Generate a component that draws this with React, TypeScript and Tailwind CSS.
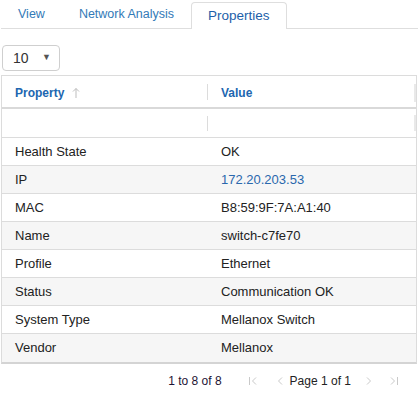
import React from "react";

const rows: { name: string; value: string; link?: boolean }[] = [
  { name: "Health State", value: "OK" },
  { name: "IP", value: "172.20.203.53", link: true },
  { name: "MAC", value: "B8:59:9F:7A:A1:40" },
  { name: "Name", value: "switch-c7fe70" },
  { name: "Profile", value: "Ethernet" },
  { name: "Status", value: "Communication OK" },
  { name: "System Type", value: "Mellanox Switch" },
  { name: "Vendor", value: "Mellanox" },
];

function Chevron({ dir, bar }: { dir: "left" | "right"; bar?: boolean }) {
  return (
    <svg width="10" height="12" viewBox="0 0 10 12" fill="none" stroke="#c9c9c9" strokeWidth="1">
      {dir === "left" ? (
        <>
          {bar && <line x1="1.5" y1="2" x2="1.5" y2="10" />}
          <polyline points="8,2.5 4.5,6 8,9.5" />
        </>
      ) : (
        <>
          <polyline points="2,2.5 5.5,6 2,9.5" />
          {bar && <line x1="8.5" y1="2" x2="8.5" y2="10" />}
        </>
      )}
    </svg>
  );
}

export default function App() {
  return (
    <div
      className="w-[418px] h-[393px] bg-white text-[13px] text-[#222]"
      style={{ fontFamily: '"Liberation Sans", Arial, sans-serif' }}
    >
      {/* вкладки */}
      <div className="flex items-end h-[29px] border-b border-[#dedede] pl-[2px] ml-[1px]">
        <div className="h-[27px] px-[15px] mr-[4px] flex items-center text-[12.5px] text-[#337ab7]">View</div>
        <div className="h-[27px] px-[15px] mr-[2px] flex items-center text-[12.5px] text-[#337ab7]">Network Analysis</div>
        <div className="h-[27px] px-[16px] -mb-px flex items-center text-[13.5px] text-[#1d5fa9] bg-white border border-b-0 border-[#dedede] rounded-t-[4px]">
          Properties
        </div>
      </div>

      {/* размер страницы */}
      <div className="mt-[16px] ml-[2px] w-[58px] h-[26px] border border-[#cfcfcf] rounded-[4px] flex items-center justify-between pl-[10px] pr-[8px]">
        <span className="text-[14px] text-[#333]">10</span>
        <span className="text-[9px] text-[#555]">▼</span>
      </div>

      {/* таблица */}
      <div className="mt-[4px] mx-[1px] border border-[#dcdcdc] border-b-[2px] border-b-[#d4d4d4]">
        <div className="relative flex h-[33px] pt-[2px] items-center border-b-[2px] border-[#d9d9d9] text-[12px] font-bold text-[#2066b0]">
          <div className="w-[206px] px-[13px] flex items-center gap-[8px] relative">
            <span>Property</span>
            <svg width="8" height="11" viewBox="0 0 8 11" fill="none" stroke="#bdbdbd" strokeWidth="1">
              <line x1="4" y1="1.5" x2="4" y2="11" />
              <polyline points="1,4.5 4,1.5 7,4.5" />
            </svg>
            <span className="absolute right-0 top-[0px] h-[16px] w-px bg-[#dcdcdc]" />
          </div>
          <div className="flex-1 px-[13px]">Value</div>
          <span className="absolute right-0 top-[8px] h-[18px] w-[2px] bg-[#e9e9e9]" />
        </div>
        <div className="relative flex h-[29px] items-center border-b border-[#dcdcdc]">
          <div className="w-[206px] h-[15px] border-r border-[#dcdcdc]" />
          <span className="absolute right-0 top-[6px] h-[16px] w-[2px] bg-[#e9e9e9]" />
        </div>
        {rows.map((r, i) => (
          <div
            key={r.name}
            className={`flex h-[28px] items-center ${i < rows.length - 1 ? "border-b border-[#dcdcdc]" : ""} ${
              i % 2 === 1 ? "bg-[#f6f6f6]" : "bg-white"
            }`}
          >
            <div className="w-[206px] px-[13px]">{r.name}</div>
            <div className={`flex-1 px-[13px] ${r.link ? "text-[#2a68ad]" : ""}`}>{r.value}</div>
          </div>
        ))}
      </div>

      {/* пагинация */}
      <div className="flex items-center justify-end h-[34px] pr-[19px] text-[12px] text-[#222]">
        <span className="mr-[26px] text-[#1e1434]">1 to 8 of 8</span>
        <span className="mr-[16px] flex"><Chevron dir="left" bar /></span>
        <span className="mr-[6px] flex"><Chevron dir="left" /></span>
        <span className="mr-[14px]">Page 1 of 1</span>
        <span className="mr-[14px] flex"><Chevron dir="right" /></span>
        <span className="flex"><Chevron dir="right" bar /></span>
      </div>
    </div>
  );
}
